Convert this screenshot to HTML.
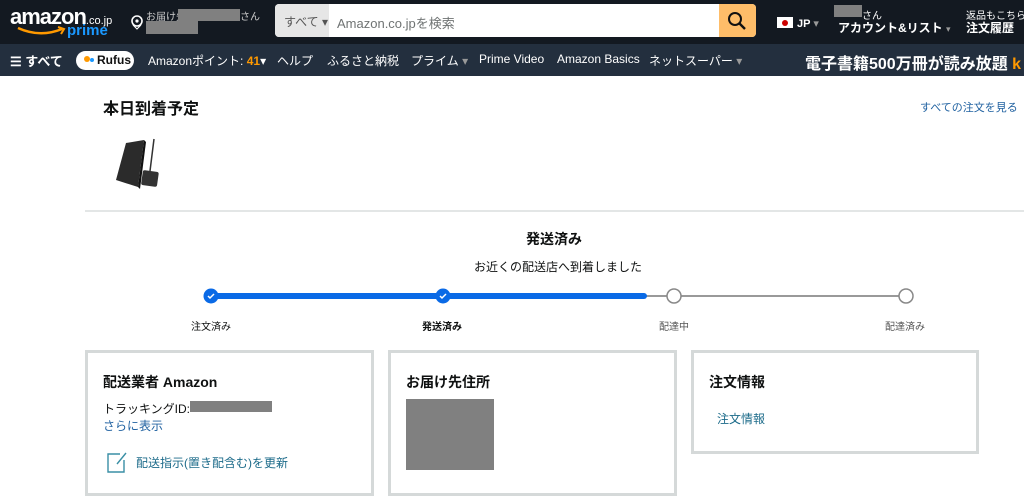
<!DOCTYPE html>
<html><head><meta charset="utf-8"><style>
*{margin:0;padding:0;box-sizing:border-box}
body{width:1024px;height:498px;overflow:hidden;background:#fff;font-family:"Liberation Sans","Noto Sans CJK JP",sans-serif;color:#0f1111;position:relative}
.a{position:absolute;white-space:nowrap}
.top{position:absolute;left:0;top:0;width:1024px;height:44px;background:#131921}
.nav{position:absolute;left:0;top:44px;width:1024px;height:32px;background:#232f3e;color:#fff;font-size:12px}
.nav .a{top:8px}
.card{position:absolute;top:350px;height:146px;border:3px solid #d5d9d9;background:#fff}
.gray{background:#808080;position:absolute}
</style></head><body>
<div class="top">
 <div class="a" style="left:10px;top:4px;color:#fff;font-size:22px;font-weight:bold;letter-spacing:-1px">amazon<span style="font-size:11px;font-weight:normal;letter-spacing:0">.co.jp</span></div>
 <svg class="a" style="left:16px;top:26px" width="52" height="12"><path d="M2 2 Q24 12 46 3" stroke="#f90" stroke-width="2.5" fill="none"/><path d="M42 1 L48 3 L45 8" stroke="#f90" stroke-width="2" fill="none"/></svg>
 <div class="a" style="left:67px;top:22px;color:#1a98ff;font-size:15px;font-weight:bold">prime</div>
 <svg class="a" style="left:130px;top:14px" width="14" height="16"><circle cx="7" cy="7" r="5" stroke="#fff" stroke-width="1.6" fill="none"/><circle cx="7" cy="7" r="1.6" fill="#fff"/><path d="M3 11 L7 15 L11 11" stroke="#fff" fill="none"/></svg>
 <div class="a" style="left:146px;top:8px;color:#ccc;font-size:10px">お届け先</div>
 <div class="gray" style="left:178px;top:9px;width:62px;height:12px"></div>
 <div class="gray" style="left:146px;top:21px;width:52px;height:13px"></div>
 <div class="a" style="left:240px;top:8px;color:#ccc;font-size:10px">さん</div>
 <div class="a" style="left:275px;top:4px;width:481px;height:33px;background:#fff;border-radius:4px;overflow:hidden">
  <div class="a" style="left:0;top:0;width:54px;height:33px;background:#e6e6e6;color:#555;font-size:12px;padding:9px 0 0 9px">すべて ▾</div>
  <div class="a" style="left:62px;top:9px;color:#6f7373;font-size:13px">Amazon.co.jpを検索</div>
  <div class="a" style="left:444px;top:0;width:37px;height:33px;background:#febd69"></div>
  <svg class="a" style="left:452px;top:7px" width="20" height="20"><circle cx="8" cy="8" r="6" stroke="#111" stroke-width="2" fill="none"/><path d="M12.5 12.5 L18 18" stroke="#111" stroke-width="2.4"/></svg>
 </div>
 <div class="a" style="left:777px;top:17px;width:16px;height:11px;background:#fff"><div style="width:6px;height:6px;border-radius:50%;background:#c00;margin:2.5px auto"></div></div>
 <div class="a" style="left:797px;top:17px;color:#fff;font-size:11px;font-weight:bold">JP <span style="color:#999;font-weight:normal">▾</span></div>
 <div class="gray" style="left:834px;top:5px;width:28px;height:12px"></div>
 <div class="a" style="left:862px;top:7px;color:#fff;font-size:10px">さん</div>
 <div class="a" style="left:838px;top:19px;color:#fff;font-size:12px;font-weight:bold">アカウント&amp;リスト <span style="color:#999;font-weight:normal;font-size:9px">▾</span></div>
 <div class="a" style="left:966px;top:7px;color:#fff;font-size:10px">返品もこちら</div>
 <div class="a" style="left:966px;top:19px;color:#fff;font-size:12px;font-weight:bold">注文履歴</div>
</div>
<div class="nav">
 <div class="a" style="left:10px;top:7px;font-size:13px;font-weight:bold">☰ すべて</div>
 <div class="a" style="left:76px;top:7px;width:58px;height:19px;background:#fff;border-radius:10px;color:#111;font-weight:bold;font-size:12px;padding:2px 0 0 21px">Rufus<span style="position:absolute;left:8px;top:5px;width:6px;height:6px;border-radius:50%;background:#f90"></span><span style="position:absolute;left:14px;top:7px;width:4px;height:4px;border-radius:50%;background:#1a98ff"></span></div>
 <div class="a" style="left:148px">Amazonポイント: <b style="color:#f90">41</b>▾</div>
 <div class="a" style="left:277px">ヘルプ</div>
 <div class="a" style="left:327px">ふるさと納税</div>
 <div class="a" style="left:411px">プライム <span style="color:#999">▾</span></div>
 <div class="a" style="left:479px">Prime Video</div>
 <div class="a" style="left:557px">Amazon Basics</div>
 <div class="a" style="left:649px">ネットスーパー <span style="color:#999">▾</span></div>
 <div class="a" style="left:805px;top:6px;font-size:16px;font-weight:bold">電子書籍500万冊が読み放題 <span style="color:#f90">k</span></div>
</div>
<div class="a" style="left:103px;top:95px;font-size:16px;font-weight:bold">本日到着予定</div>
<div class="a" style="left:920px;top:99px;font-size:11px;color:#2162a1">すべての注文を見る</div>
<svg class="a" style="left:112px;top:135px" width="58" height="58"><polygon points="14,8 32,5 26,52 4,45" fill="#2b2b2b"/><polygon points="32,5 34,7 28,54 26,52" fill="#111"/><path d="M42 4 L40 20 L38 36" stroke="#333" stroke-width="1.5" fill="none"/><rect x="30" y="36" width="16" height="15" rx="2" fill="#333" transform="rotate(8 38 43)"/></svg>
<div class="a" style="left:85px;top:210px;width:939px;height:2px;background:#e3e6e6"></div>
<div class="a" style="left:526px;top:229px;font-size:14px;font-weight:bold">発送済み</div>
<div class="a" style="left:474px;top:258px;font-size:12px">お近くの配送店へ到着しました</div>
<div class="a" style="left:211px;top:295px;width:700px;height:2px;background:#999"></div>
<div class="a" style="left:211px;top:293px;width:436px;height:6px;background:#0a6ae6;border-radius:3px"></div>
<svg class="a" style="left:203px;top:288px" width="16" height="16"><circle cx="8" cy="8" r="7.5" fill="#0a6ae6"/><path d="M5 8 L7 10 L11 6" stroke="#fff" stroke-width="1.5" fill="none"/></svg>
<svg class="a" style="left:435px;top:288px" width="16" height="16"><circle cx="8" cy="8" r="7.5" fill="#0a6ae6"/><path d="M5 8 L7 10 L11 6" stroke="#fff" stroke-width="1.5" fill="none"/></svg>
<svg class="a" style="left:666px;top:288px" width="16" height="16"><circle cx="8" cy="8" r="7" fill="#fff" stroke="#888" stroke-width="1.5"/></svg>
<svg class="a" style="left:898px;top:288px" width="16" height="16"><circle cx="8" cy="8" r="7" fill="#fff" stroke="#888" stroke-width="1.5"/></svg>
<div class="a" style="left:191px;top:318px;font-size:10px">注文済み</div>
<div class="a" style="left:422px;top:318px;font-size:10px;font-weight:bold">発送済み</div>
<div class="a" style="left:659px;top:318px;font-size:10px;color:#555">配達中</div>
<div class="a" style="left:885px;top:318px;font-size:10px;color:#555">配達済み</div>
<div class="card" style="left:85px;width:289px">
 <div class="a" style="left:15px;top:19px;font-size:14px;font-weight:bold">配送業者 Amazon</div>
 <div class="a" style="left:15px;top:47px;font-size:12px">トラッキングID:</div>
 <div class="gray" style="left:102px;top:48px;width:82px;height:11px"></div>
 <div class="a" style="left:15px;top:64px;font-size:12px;color:#2162a1">さらに表示</div>
 <svg class="a" style="left:18px;top:97px" width="22" height="24"><path d="M14 4 H2 V22 H18 V10" stroke="#3a8fa5" stroke-width="1.4" fill="none"/><path d="M11 14 L20 3" stroke="#3a8fa5" stroke-width="1.4"/></svg>
 <div class="a" style="left:48px;top:101px;font-size:12px;color:#1c6b8a">配送指示(置き配含む)を更新</div>
</div>
<div class="card" style="left:388px;width:289px">
 <div class="a" style="left:15px;top:19px;font-size:14px;font-weight:bold">お届け先住所</div>
 <div class="gray" style="left:15px;top:46px;width:88px;height:71px"></div>
</div>
<div class="card" style="left:691px;width:288px;height:104px">
 <div class="a" style="left:15px;top:19px;font-size:14px;font-weight:bold">注文情報</div>
 <div class="a" style="left:23px;top:57px;font-size:12px;color:#1c6b8a">注文情報</div>
</div>
</body></html>
